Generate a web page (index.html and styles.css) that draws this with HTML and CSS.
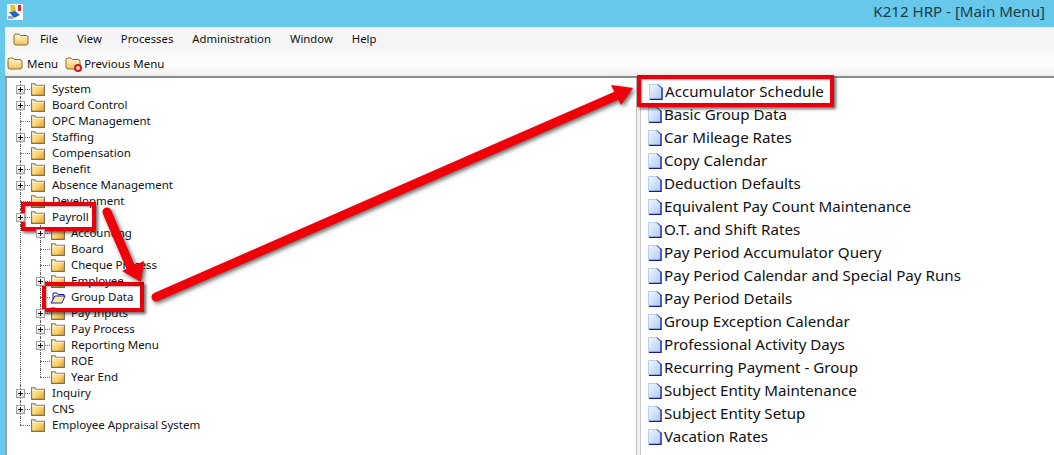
FILE: index.html
```html
<!DOCTYPE html>
<html lang="en">
<head>
<meta charset="utf-8">
<title>K212 HRP - [Main Menu]</title>
<link rel="stylesheet" href="styles.css">
</head>
<body>
<svg class="defs" width="0" height="0" aria-hidden="true">
  <defs>
    <linearGradient id="fg" x1="0" y1="0" x2="1" y2="1"><stop offset="0" stop-color="#fff6c8"/><stop offset=".55" stop-color="#fbd268"/><stop offset="1" stop-color="#e09a28"/></linearGradient>
    <linearGradient id="tb" x1="0" y1="0" x2="0" y2="1"><stop offset="0" stop-color="#fff8d8"/><stop offset="1" stop-color="#f2c05a"/></linearGradient>
    <linearGradient id="dg" x1="0" y1="0" x2="1" y2="1"><stop offset="0" stop-color="#f4f8ff"/><stop offset="1" stop-color="#a9c8ee"/></linearGradient>
    <symbol id="folder" viewBox="0 0 15 13"><path d="M1.500 12.500V1.500h3l1 1.500h8v9.500z" fill="url(#fg)" stroke="#77705a"/><path d="M2 4h11" stroke="#fff3c0"/></symbol>
    <symbol id="tfolder" viewBox="0 0 16 13"><path d="M1 3q0-2 2-2h3l1.500 1.500H13q2 0 2 2V10q0 2-2 2H3q-2 0-2-2z" fill="url(#tb)" stroke="#8d6a28"/></symbol>
    <symbol id="open" viewBox="0 0 16 14"><path d="M3 12V3h4l1 1.500h6V7" fill="#fff6c0" stroke="#1c1cb0"/><path d="M1 13l4-7h10l-3 7z" fill="#ffe98e" stroke="#1c1cb0"/></symbol>
    <symbol id="doc" viewBox="0 0 14 16"><path d="M.5 .5h9l4 4v11H.5z" fill="url(#dg)" stroke="#b9d0ec"/><path d="M13 3.500V15.500H1" fill="none" stroke="#1a1aa8" stroke-width="1.300"/><path d="M9 .5l4 4" stroke="#1a1aa8"/></symbol>
  </defs>
</svg>
<div class="window">
  <header class="titlebar">
    <svg class="appicon" viewBox="0 0 16 16"><rect width="16" height="16" fill="#fff"/><path d="M3 1h5l1 6H4z" fill="#d8c62c"/><path d="M2 8l6-1 5 4-6 3z" fill="#2a62c8"/><path d="M11 1h3v6h-3z" fill="#d42a2a"/><path d="M1 12h5v3H1z" fill="#9aa8b8"/></svg>
    <span class="apptitle">K212 HRP - [Main Menu]</span>
  </header>
  <div class="frame">
    <nav class="menubar">
      <svg class="mfolder"><use href="#tfolder"/></svg>
      <span class="m m-file">File</span><span class="m">View</span><span class="m">Processes</span><span class="m">Administration</span><span class="m">Window</span><span class="m">Help</span>
    </nav>
    <div class="toolbar">
      <svg class="tfolder"><use href="#tfolder"/></svg><span class="tlabel">Menu</span>
      <span class="prev"><svg class="tfolder"><use href="#tfolder"/></svg><i class="badge"></i></span><span class="tlabel">Previous Menu</span>
    </div>
    <main class="panes">
      <section class="tree">
        <div class="row"><span class="c tee"><b class="exp"></b></span><svg class="fold"><use href="#folder"/></svg><span>System</span></div>
        <div class="row"><span class="c tee"><b class="exp"></b></span><svg class="fold"><use href="#folder"/></svg><span>Board Control</span></div>
        <div class="row"><span class="c tee"></span><svg class="fold"><use href="#folder"/></svg><span>OPC Management</span></div>
        <div class="row"><span class="c tee"><b class="exp"></b></span><svg class="fold"><use href="#folder"/></svg><span>Staffing</span></div>
        <div class="row"><span class="c tee"></span><svg class="fold"><use href="#folder"/></svg><span>Compensation</span></div>
        <div class="row"><span class="c tee"><b class="exp"></b></span><svg class="fold"><use href="#folder"/></svg><span>Benefit</span></div>
        <div class="row"><span class="c tee"><b class="exp"></b></span><svg class="fold"><use href="#folder"/></svg><span>Absence Management</span></div>
        <div class="row"><span class="c tee"></span><svg class="fold"><use href="#folder"/></svg><span>Development</span></div>
        <div class="row"><span class="c tee"><b class="exp"></b></span><svg class="fold"><use href="#folder"/></svg><span>Payroll</span></div>
        <div class="row sub"><span class="c pipe"></span><span class="c tee"><b class="exp"></b></span><svg class="fold"><use href="#folder"/></svg><span>Accounting</span></div>
        <div class="row sub"><span class="c pipe"></span><span class="c tee"></span><svg class="fold"><use href="#folder"/></svg><span>Board</span></div>
        <div class="row sub"><span class="c pipe"></span><span class="c tee"></span><svg class="fold"><use href="#folder"/></svg><span>Cheque Process</span></div>
        <div class="row sub"><span class="c pipe"></span><span class="c tee"><b class="exp"></b></span><svg class="fold"><use href="#folder"/></svg><span>Employee</span></div>
        <div class="row sub"><span class="c pipe"></span><span class="c tee"></span><svg class="fold"><use href="#open"/></svg><span>Group Data</span></div>
        <div class="row sub"><span class="c pipe"></span><span class="c tee"><b class="exp"></b></span><svg class="fold"><use href="#folder"/></svg><span>Pay Inputs</span></div>
        <div class="row sub"><span class="c pipe"></span><span class="c tee"><b class="exp"></b></span><svg class="fold"><use href="#folder"/></svg><span>Pay Process</span></div>
        <div class="row sub"><span class="c pipe"></span><span class="c tee"><b class="exp"></b></span><svg class="fold"><use href="#folder"/></svg><span>Reporting Menu</span></div>
        <div class="row sub"><span class="c pipe"></span><span class="c tee"></span><svg class="fold"><use href="#folder"/></svg><span>ROE</span></div>
        <div class="row sub"><span class="c pipe"></span><span class="c elbow"></span><svg class="fold"><use href="#folder"/></svg><span>Year End</span></div>
        <div class="row"><span class="c tee"><b class="exp"></b></span><svg class="fold"><use href="#folder"/></svg><span>Inquiry</span></div>
        <div class="row"><span class="c tee"><b class="exp"></b></span><svg class="fold"><use href="#folder"/></svg><span>CNS</span></div>
        <div class="row"><span class="c elbow"></span><svg class="fold"><use href="#folder"/></svg><span>Employee Appraisal System</span></div>
      </section>
      <div class="splitter"></div>
      <section class="list">
        <div class="item first"><svg class="doc"><use href="#doc"/></svg><span>Accumulator Schedule</span></div>
        <div class="item"><svg class="doc"><use href="#doc"/></svg><span>Basic Group Data</span></div>
        <div class="item"><svg class="doc"><use href="#doc"/></svg><span>Car Mileage Rates</span></div>
        <div class="item"><svg class="doc"><use href="#doc"/></svg><span>Copy Calendar</span></div>
        <div class="item"><svg class="doc"><use href="#doc"/></svg><span>Deduction Defaults</span></div>
        <div class="item"><svg class="doc"><use href="#doc"/></svg><span>Equivalent Pay Count Maintenance</span></div>
        <div class="item"><svg class="doc"><use href="#doc"/></svg><span>O.T. and Shift Rates</span></div>
        <div class="item"><svg class="doc"><use href="#doc"/></svg><span>Pay Period Accumulator Query</span></div>
        <div class="item"><svg class="doc"><use href="#doc"/></svg><span>Pay Period Calendar and Special Pay Runs</span></div>
        <div class="item"><svg class="doc"><use href="#doc"/></svg><span>Pay Period Details</span></div>
        <div class="item"><svg class="doc"><use href="#doc"/></svg><span>Group Exception Calendar</span></div>
        <div class="item"><svg class="doc"><use href="#doc"/></svg><span>Professional Activity Days</span></div>
        <div class="item"><svg class="doc"><use href="#doc"/></svg><span>Recurring Payment - Group</span></div>
        <div class="item"><svg class="doc"><use href="#doc"/></svg><span>Subject Entity Maintenance</span></div>
        <div class="item"><svg class="doc"><use href="#doc"/></svg><span>Subject Entity Setup</span></div>
        <div class="item"><svg class="doc"><use href="#doc"/></svg><span>Vacation Rates</span></div>
      </section>
    </main>
  </div>
</div>
<div class="callout box-payroll"></div>
<div class="callout box-group"></div>
<div class="callout box-accum"></div>
<svg class="arrows" width="1054" height="455" viewBox="0 0 1054 455">
  <path class="shaft" d="M107 212L131 268"/>
  <path class="head" d="M122 271L144 261L141 282z"/>
  <path class="shaft" d="M156 297L618 95"/>
  <path class="head" d="M611 85L633 88L621 105z"/>
</svg>
</body>
</html>
```
FILE: styles.css
```css
* { box-sizing: border-box; }
html, body { margin: 0; padding: 0; }
body {
  width: 1054px;
  height: 455px;
  overflow: hidden;
  position: relative;
  background: #66c9ec;
  font-family: "Noto Sans", "Liberation Sans", sans-serif;
  font-size: 11.500px;
  color: #111;
}
.defs { position: absolute; }
.window { display: flex; flex-direction: column; height: 455px; }
.titlebar { height: 27px; flex: none; display: flex; align-items: flex-start; justify-content: space-between; padding: 1px 9px 0 7px; }
.appicon { width: 16px; height: 16px; margin-top: 3px; }
.apptitle { font-size: 15.100px; line-height: 20px; color: #1c3c48; }
.frame { flex: 1; margin-left: 5px; display: flex; flex-direction: column; min-height: 0; }
.menubar { height: 24px; flex: none; background: #f5f5f5; display: flex; align-items: center; padding-left: 8px; font-size: 11.300px; }
.mfolder { width: 16px; height: 13px; margin-right: 11px; }
.m { margin-right: 19px; line-height: 24px; }
.toolbar { height: 27px; flex: none; background: linear-gradient(#fafafa, #fdfdfd 60%, #eee); display: flex; align-items: center; padding-left: 2px; border-bottom: 2px solid #8a8a8a; }
.tfolder { width: 16px; height: 13px; display: block; }
.tlabel { margin-left: 4px; margin-right: 7px; }
.prev { position: relative; width: 16px; height: 13px; }
.prev + .tlabel { margin-left: 3px; }
.badge { position: absolute; right: -1px; bottom: -2px; width: 8px; height: 8px; border-radius: 50%; border: 2px solid #e01414; background: #ddd; }
.panes { flex: 1; display: flex; min-height: 0; background: #fff; border-left: 2px solid #a0a0a0; }
.tree { width: 629px; flex: none; padding: 3px 0 0 3px; }
.row { height: 16px; display: flex; align-items: center; white-space: nowrap; line-height: 16px; }
.row > span:last-child { margin-left: 1px; }
.row.sub > span:last-child { margin-left: 0; }
.c { width: 20px; height: 16px; flex: none; position: relative; }
.pipe::before, .tee::before, .elbow::before { content: ""; position: absolute; left: 10px; top: 0; border-left: 1px dotted #666; }
.pipe::before, .tee::before { height: 16px; }
.elbow::before { height: 8px; }
.tee::after, .elbow::after { content: ""; position: absolute; left: 10px; top: 8px; width: 10px; border-top: 1px dotted #666; }
.exp { position: absolute; z-index: 1; left: 6px; top: 4px; width: 9px; height: 9px; border: 1px solid #a0a0a0; background: linear-gradient(#fff, #e0e0e0); }
.exp::before { content: ""; position: absolute; left: 1px; top: 3px; width: 5px; height: 1px; background: #111; }
.exp::after { content: ""; position: absolute; left: 3px; top: 1px; width: 1px; height: 5px; background: #111; }
.fold { width: 16px; height: 14px; flex: none; margin-right: 5px; }
.splitter { width: 5px; flex: none; background: #f2f2f2; border-left: 1px solid #bbb; border-right: 1px solid #ccc; }
.list { flex: 1; padding-top: 2px; font-size: 15.150px; }
.item { height: 23px; display: flex; align-items: center; white-space: nowrap; padding-left: 7px; line-height: 23px; }
.item.first { padding-left: 8px; }
.doc { width: 14px; height: 16px; flex: none; margin-right: 2px; }
.callout { position: absolute; border: 4px solid #e8000c; box-shadow: 2px 2px 3px rgba(0,0,0,.6), inset 1px 1px 2px rgba(0,0,0,.35); }
.box-payroll { left: 21px; top: 202px; width: 75px; height: 29px; }
.box-group { left: 42px; top: 282px; width: 102px; height: 30px; }
.box-accum { left: 637px; top: 75px; width: 197px; height: 32px; }
.arrows { position: absolute; left: 0; top: 0; filter: drop-shadow(2px 2px 2px rgba(0,0,0,.6)); }
.shaft { fill: none; stroke: #f00008; stroke-width: 9; stroke-linecap: round; }
.head { fill: #f00008; }
```
